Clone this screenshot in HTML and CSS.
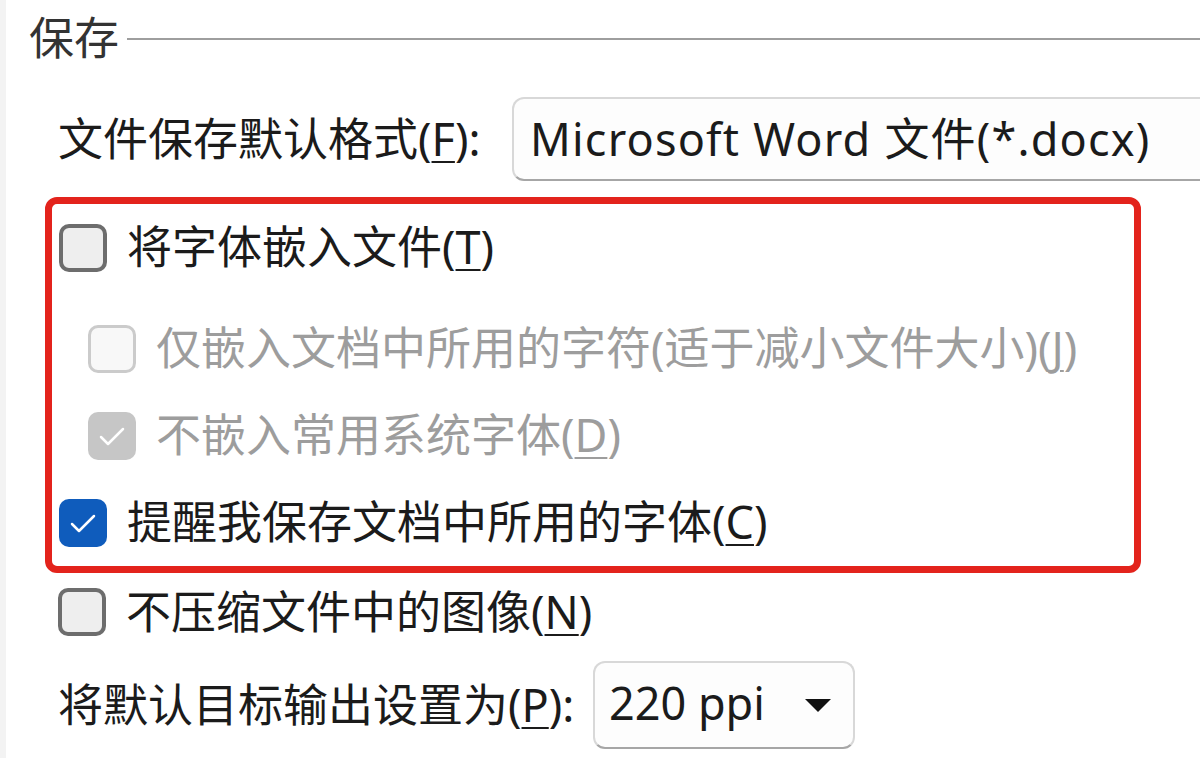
FILE: index.html
```html
<!DOCTYPE html>
<html lang="zh-CN">
<head>
    <meta charset="UTF-8">
    <title>保存选项</title>
    <link rel="stylesheet" href="styles.css">
</head>
<body>
<div class="page">
    <div class="group-title">
        <span>保存</span>
        <div class="rule"></div>
    </div>

    <div class="field-row">
        <div class="field-label">文件保存默认格式(<u>F</u>):</div>
        <div class="combo wide"><span>Microsoft Word 文件(*.docx)</span></div>
    </div>

    <div class="highlight">
        <div class="check-row first">
            <div class="box"></div>
            <span>将字体嵌入文件(<u>T</u>)</span>
        </div>
        <div class="check-row sub">
            <div class="box disabled"></div>
            <span>仅嵌入文档中所用的字符(适于减小文件大小)(<u>J</u>)</span>
        </div>
        <div class="check-row sub">
            <div class="box disabled-checked">
                <svg viewBox="0 0 48 48" width="48" height="48"><path d="M13 25 L20 32 L35 17" fill="none" stroke="#fff" stroke-width="2.5" stroke-linecap="round" stroke-linejoin="round"/></svg>
            </div>
            <span>不嵌入常用系统字体(<u>D</u>)</span>
        </div>
        <div class="check-row">
            <div class="box checked">
                <svg viewBox="0 0 48 48" width="48" height="48"><path d="M13 25 L20 32 L35 17" fill="none" stroke="#fff" stroke-width="2.5" stroke-linecap="round" stroke-linejoin="round"/></svg>
            </div>
            <span>提醒我保存文档中所用的字体(<u>C</u>)</span>
        </div>
    </div>

    <div class="check-row standalone">
        <div class="box"></div>
        <span>不压缩文件中的图像(<u>N</u>)</span>
    </div>

    <div class="field-row output">
        <div class="field-label narrow">将默认目标输出设置为(<u>P</u>):</div>
        <div class="combo small">
            <span>220 ppi</span>
            <svg viewBox="0 0 26 14" width="26" height="14"><path d="M0 0 L26 0 L13 13 Z" fill="#111"/></svg>
        </div>
    </div>
</div>
</body>
</html>
```

FILE: styles.css
```css
body {
    margin: 0;
    background-color: #ffffff;
    font-family: "Noto Sans", "Noto Sans CJK SC", sans-serif;
    font-size: 45px;
    color: #1b1b1b;
    overflow: hidden;
}

.page {
    width: 1200px;
    height: 758px;
    overflow: hidden;
    box-shadow: inset 6px 0 0 #f3f3f3;
}

u {
    text-decoration-thickness: 2px;
    text-underline-offset: 5px;
}

.group-title {
    display: flex;
    align-items: center;
    height: 80px;
    padding-left: 29px;
    color: #333;
}

.group-title span {
    line-height: 80px;
    margin-top: -4px;
}

.group-title .rule {
    flex: 1;
    height: 2px;
    margin-left: 8px;
    margin-top: -2px;
    background-color: #9e9e9e;
}

.field-row {
    display: flex;
    align-items: center;
    height: 84px;
    margin-top: 17px;
    padding-left: 58px;
}

.field-label {
    width: 454px;
    flex-shrink: 0;
    white-space: nowrap;
    margin-top: -6px;
}

.field-label.narrow {
    width: 535px;
}

.combo {
    display: flex;
    align-items: center;
    box-sizing: border-box;
    height: 84px;
    flex-shrink: 0;
    padding-left: 16px;
    border: 2px solid #d8d8d8;
    border-bottom-color: #a6a6a6;
    border-radius: 12px;
    background-color: #fdfdfd;
    white-space: nowrap;
}

.combo span {
    margin-top: -6px;
}

.combo.wide {
    width: 730px;
    letter-spacing: 1.2px;
}

.combo.small {
    width: 262px;
    height: 88px;
    padding: 0 22px 0 14px;
    justify-content: space-between;
}

.combo.small svg {
    display: block;
    margin-top: 2px;
}

.highlight {
    width: 1096px;
    box-sizing: border-box;
    margin: 16px 0 0 45px;
    padding-left: 7px;
    border: 7px solid #e3231c;
    border-radius: 12px;
}

.check-row {
    display: flex;
    align-items: center;
    gap: 20px;
    height: 87px;
    white-space: nowrap;
}

.check-row span {
    margin-top: -6px;
}

.check-row.first {
    height: 87px;
    margin-bottom: 14px;
}

.check-row.sub {
    padding-left: 29px;
    color: #9d9d9d;
}

.check-row.standalone {
    height: 78px;
    padding-left: 58px;
}

.field-row.output {
    height: 88px;
    margin-top: 10px;
}

.box {
    width: 48px;
    height: 48px;
    box-sizing: border-box;
    flex-shrink: 0;
    border: 4px solid #6d6d6d;
    border-radius: 10px;
    background-color: #eeeeee;
}

.box svg {
    display: block;
}

.box.disabled {
    border: 3px solid #cbcbcb;
    background-color: #f8f8f8;
}

.box.disabled-checked {
    border: none;
    background-color: #c6c6c6;
}

.box.checked {
    border: none;
    background-color: #0f5cbc;
}
```
